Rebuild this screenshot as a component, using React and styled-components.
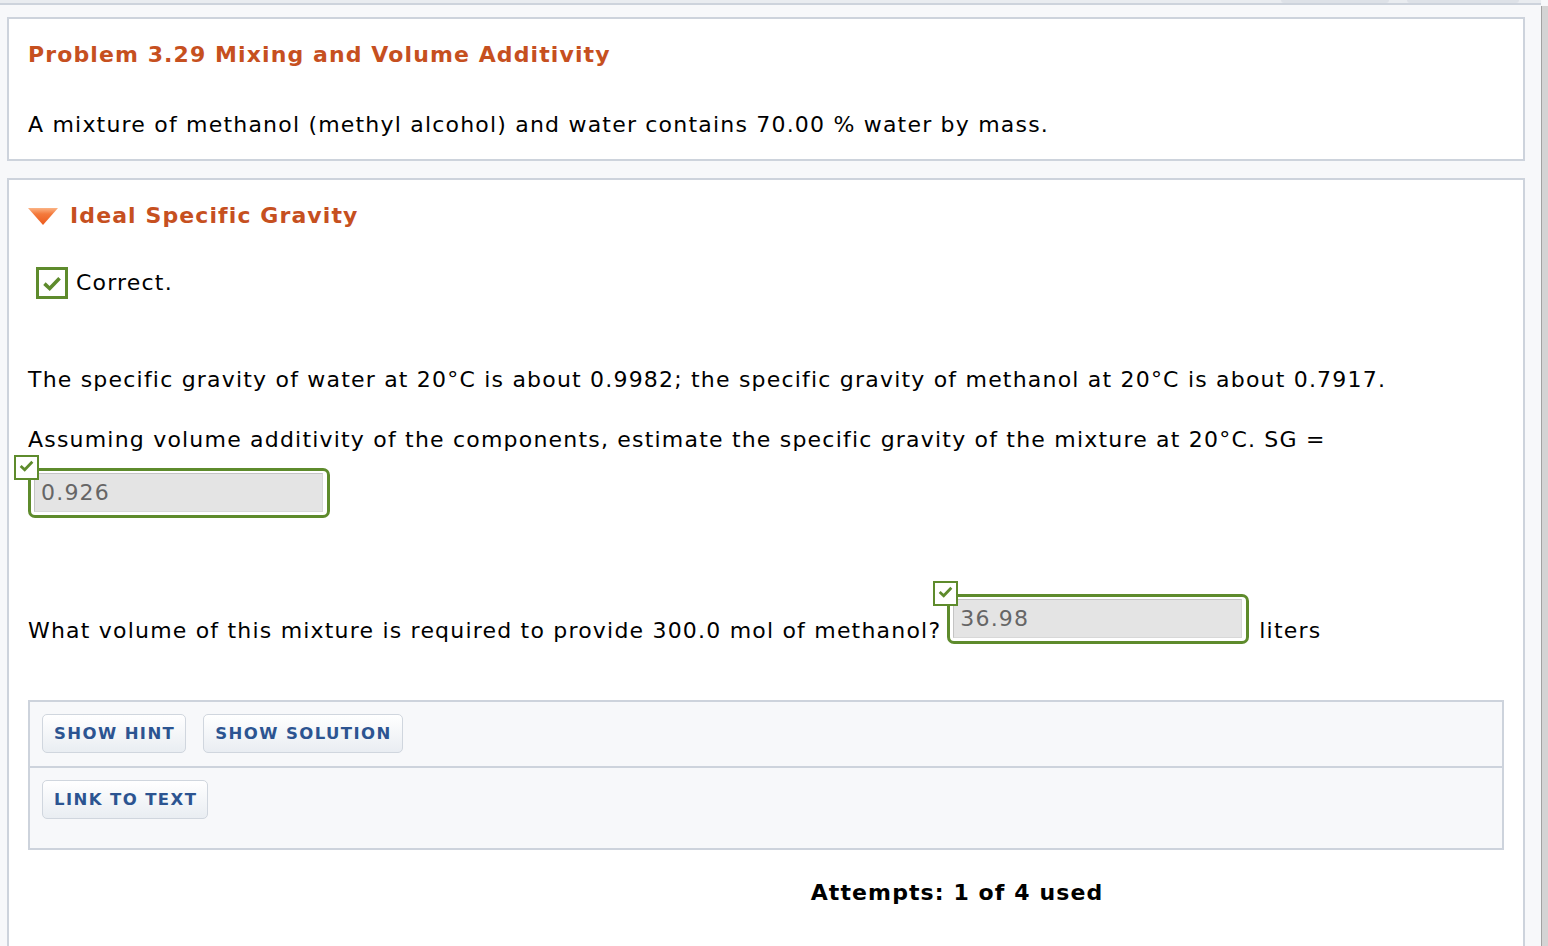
import React from "react";
import styled, { createGlobalStyle } from "styled-components";

const GlobalStyle = createGlobalStyle`
  html, body {
    margin: 0;
    padding: 0;
    background: #f7f8fa;
  }
  body {
    font-family: "DejaVu Sans", Verdana, sans-serif;
    color: #000;
  }
`;

const green = "#5e8b2c";

const Page = styled.div`
  display: flex;
  height: 946px;
  overflow: hidden;
`;

const Main = styled.div`
  flex: 1;
  display: flex;
  flex-direction: column;
`;

const TopStrip = styled.div`
  height: 4px;
  background: #e9ecf0;
  border-bottom: 2px solid #cdd3dc;
  display: flex;
  justify-content: flex-end;
  gap: 18px;
  padding-right: 22px;
`;

const Tab = styled.div`
  width: ${({ w }) => w}px;
  height: 3px;
  background: #dde1e7;
  border-radius: 0 0 8px 8px;
`;

const Scrollbar = styled.div`
  width: 6px;
  background: #d4d4d4;
  border-left: 1px solid #a2a2a2;
  margin-top: 6px;
`;

const Content = styled.div`
  padding: 12px 16px 0 7px;
  display: flex;
  flex-direction: column;
  gap: 17px;
`;

const Box = styled.section`
  background: #fff;
  border: 2px solid #cdd3dc;
  padding: 21px 19px ${({ bottom }) => bottom}px;
`;

const Title = styled.h1`
  margin: 0;
  font-size: 22px;
  letter-spacing: 1.1px;
  line-height: 30px;
  font-weight: bold;
  color: #c6501f;
`;

const Text = styled.p`
  margin: ${({ top }) => top || 0}px 0 0;
  font-size: 22px;
  letter-spacing: 1.2px;
  line-height: 30px;
`;

const PartHeader = styled.div`
  display: flex;
  align-items: center;
  gap: 12px;
  height: 30px;
`;

const CorrectRow = styled.div`
  display: flex;
  align-items: center;
  gap: 8px;
  margin: 36px 0 0 8px;
  font-size: 22px;
  letter-spacing: 1.2px;
  line-height: 32px;
`;

const CheckBox = styled.span`
  box-sizing: border-box;
  width: ${({ size }) => size}px;
  height: ${({ size }) => size}px;
  border: ${({ thick }) => thick}px solid ${green};
  background: #fff;
  display: flex;
  align-items: ${({ top }) => (top ? "flex-start" : "center")};
  justify-content: center;
`;

const Badge = styled(CheckBox)`
  position: absolute;
  left: -17px;
  top: -16px;
  z-index: 1;
`;

const AnswerWrap = styled.div`
  position: relative;
  box-sizing: border-box;
  width: 302px;
  height: 50px;
  border: 3px solid ${green};
  border-radius: 7px;
  padding: 2px 4px 3px 3px;
  margin-top: ${({ top }) => top || 0}px;
  background: #fff;
  flex-shrink: 0;
`;

const AnswerInput = styled.div`
  box-sizing: border-box;
  height: 100%;
  background: #e4e4e4;
  border: 1px solid #c4c4c4;
  border-right-color: #d8d8d8;
  border-bottom-color: #d8d8d8;
  padding-left: 6px;
  font-size: 22px;
  letter-spacing: 1.2px;
  line-height: 38px;
  color: #666;
`;

const InlineRow = styled.div`
  display: flex;
  align-items: flex-end;
  gap: 8px;
  margin-top: 76px;
  font-size: 22px;
  letter-spacing: 1.2px;
  line-height: 30px;

  & > ${AnswerWrap} {
    margin: 0 2px 2px -2px;
  }
`;

const ActionPanel = styled.div`
  margin-top: 54px;
  background: #f7f8fa;
  border: 2px solid #cdd3dc;
`;

const ActionRow = styled.div`
  display: flex;
  gap: 17px;
  padding: 12px 12px ${({ bottom }) => bottom}px;
  & + & {
    border-top: 2px solid #cdd3dc;
  }
`;

const ActionButton = styled.button`
  height: 39px;
  padding: 0 10px 0 11px;
  border: 1px solid #d0d6de;
  border-radius: 5px;
  background: linear-gradient(#ffffff, #e9edf2);
  color: #2c5491;
  font-family: "DejaVu Sans", Verdana, sans-serif;
  font-weight: bold;
  font-size: 16.5px;
  letter-spacing: 1.4px;
  cursor: pointer;
`;

const Attempts = styled.div`
  margin-top: 28px;
  padding-left: 382px;
  text-align: center;
  font-size: 22px;
  letter-spacing: 1.1px;
  line-height: 30px;
  font-weight: bold;
`;

const Check = ({ size }) => (
  <svg width={size} height={size} viewBox="0 0 16 16">
    <path d="M2.5 8.5 L6.3 12 L13.5 4.5" fill="none" stroke={green} strokeWidth="2.6" />
  </svg>
);

const Triangle = () => (
  <svg width="30" height="17" viewBox="0 0 30 17">
    <defs>
      <linearGradient id="tri" x1="0" y1="0" x2="0" y2="1">
        <stop offset="0" stopColor="#fbb384" />
        <stop offset="0.35" stopColor="#f47a3c" />
        <stop offset="1" stopColor="#ec5a1c" />
      </linearGradient>
    </defs>
    <polygon points="0,0 30,0 15,17" fill="url(#tri)" />
  </svg>
);

const Answer = ({ value, top }) => (
  <AnswerWrap top={top}>
    <Badge size={25} thick={2} top>
      <Check size={17} />
    </Badge>
    <AnswerInput>{value}</AnswerInput>
  </AnswerWrap>
);

export default function App() {
  return (
    <>
      <GlobalStyle />
      <Page>
        <Main>
          <TopStrip>
            <Tab w={108} />
            <Tab w={112} />
          </TopStrip>
          <Content>
            <Box bottom={19}>
              <Title>Problem 3.29 Mixing and Volume Additivity</Title>
              <Text top={40}>
                A mixture of methanol (methyl alcohol) and water contains 70.00 % water by mass.
              </Text>
            </Box>
            <Box bottom={80}>
              <PartHeader>
                <Triangle />
                <Title>Ideal Specific Gravity</Title>
              </PartHeader>
              <CorrectRow>
                <CheckBox size={32} thick={3}>
                  <Check size={22} />
                </CheckBox>
                Correct.
              </CorrectRow>
              <Text top={66}>
                The specific gravity of water at 20°C is about 0.9982; the specific gravity of
                methanol at 20°C is about 0.7917.
              </Text>
              <Text top={30}>
                Assuming volume additivity of the components, estimate the specific gravity of the
                mixture at 20°C. SG =
              </Text>
              <Answer value="0.926" top={13} />
              <InlineRow>
                <span>What volume of this mixture is required to provide 300.0 mol of methanol?</span>
                <Answer value="36.98" />
                <span>liters</span>
              </InlineRow>
              <ActionPanel>
                <ActionRow bottom={13}>
                  <ActionButton>SHOW HINT</ActionButton>
                  <ActionButton>SHOW SOLUTION</ActionButton>
                </ActionRow>
                <ActionRow bottom={29}>
                  <ActionButton>LINK TO TEXT</ActionButton>
                </ActionRow>
              </ActionPanel>
              <Attempts>Attempts: 1 of 4 used</Attempts>
            </Box>
          </Content>
        </Main>
        <Scrollbar />
      </Page>
    </>
  );
}
